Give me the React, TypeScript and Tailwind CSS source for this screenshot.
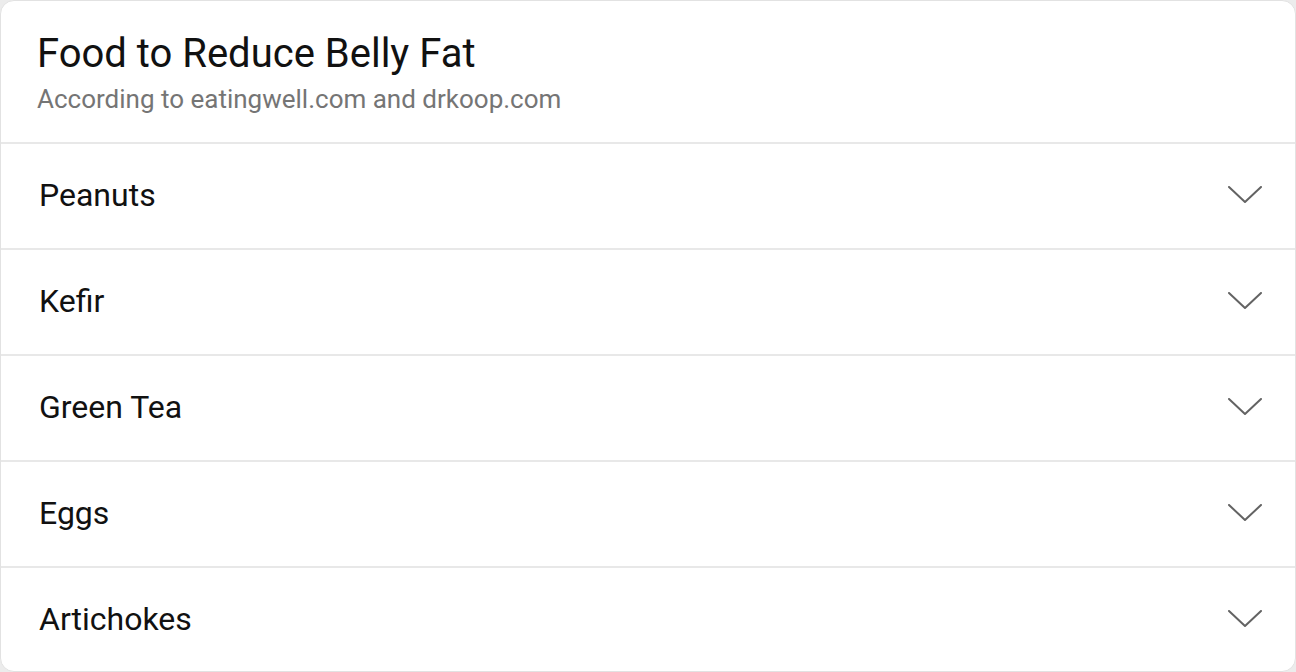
import React from "react";

const items = ["Peanuts", "Kefir", "Green Tea", "Eggs", "Artichokes"];

function Chevron() {
  return (
    <svg width="34" height="18" viewBox="0 0 34 18" fill="none">
      <path d="M1 1 L17 16 L33 1" stroke="#636363" strokeWidth="2" strokeLinecap="round" strokeLinejoin="round" />
    </svg>
  );
}

export default function App() {
  return (
    <div className="w-[1296px] h-[672px] bg-[#ececec]" style={{ fontFamily: "Roboto, 'Noto Sans', sans-serif" }}>
      <div className="w-full h-full bg-white rounded-[14px] border border-[#e2e2e2] overflow-hidden flex flex-col">
        <div className="h-[141px] flex flex-col justify-start pl-[36px] pt-[29px] shrink-0">
          <div className="text-[40px] leading-[48px] text-[#111111]">Food to Reduce Belly Fat</div>
          <div className="text-[26px] leading-[32px] text-[#757575] mt-[5px]">According to eatingwell.com and drkoop.com</div>
        </div>
        {items.map((it) => (
          <div key={it} className="h-[106px] shrink-0 border-t-2 border-[#e8e8e8] flex items-center justify-between pl-[38px] pr-[33px] pb-[2px]">
            <span className="text-[32px] text-[#111111]">{it}</span>
            <Chevron />
          </div>
        ))}
      </div>
    </div>
  );
}
